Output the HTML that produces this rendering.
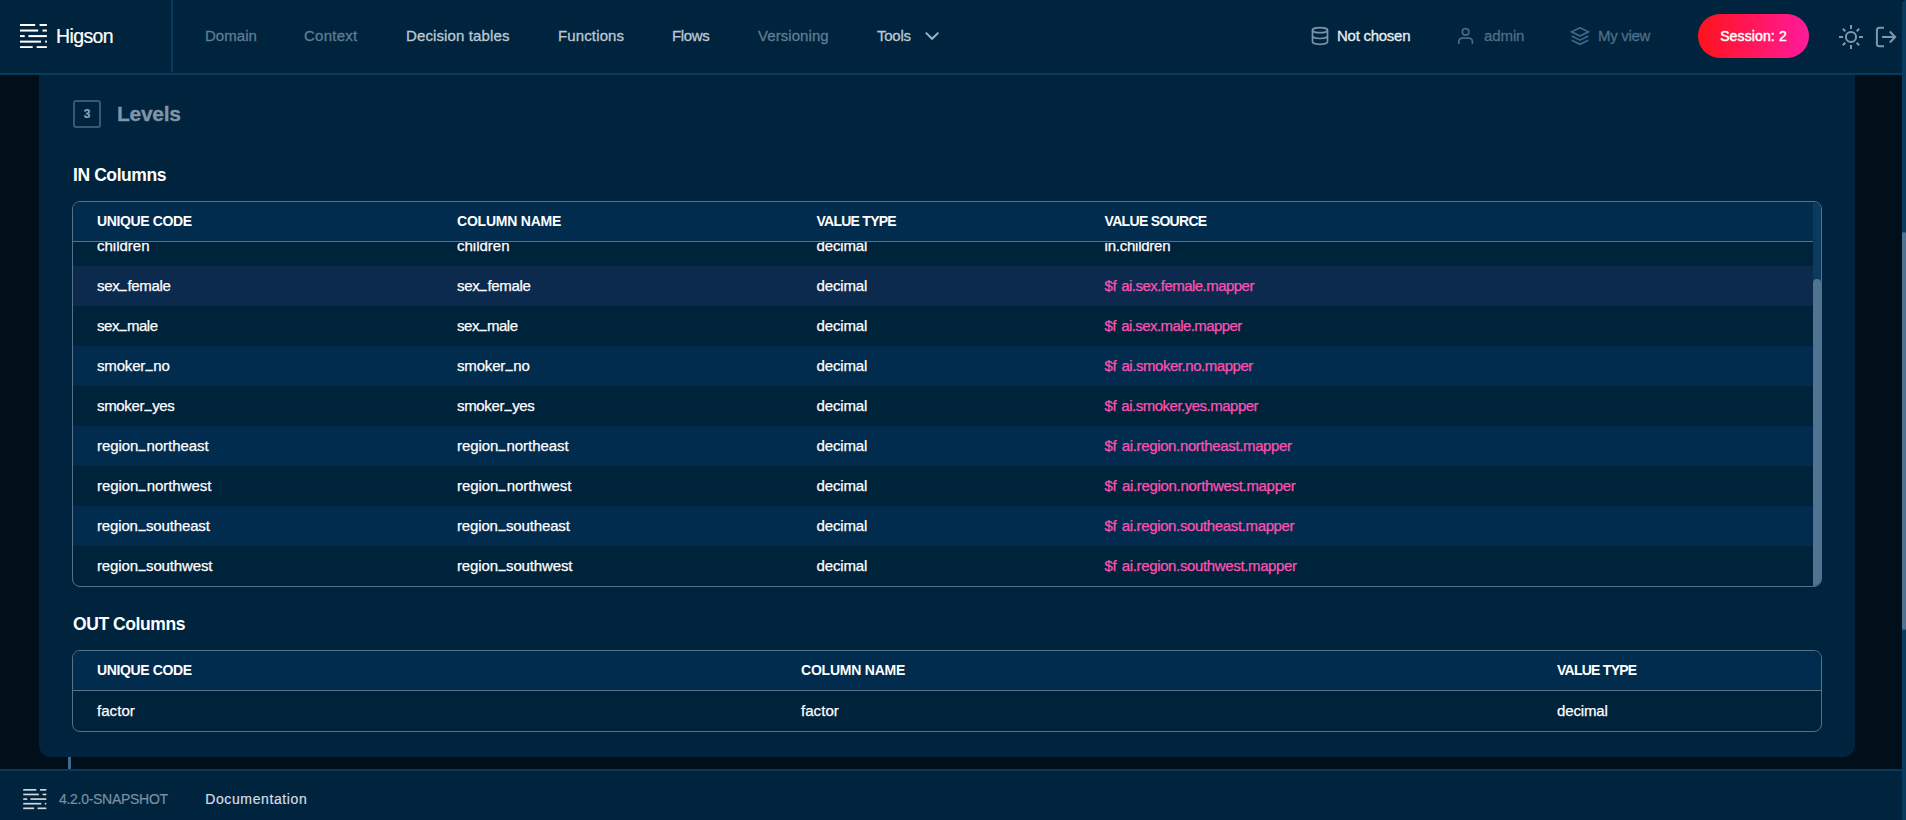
<!DOCTYPE html>
<html lang="en">
<head>
<meta charset="utf-8">
<title>Higson Studio</title>
<style>
*{box-sizing:border-box;margin:0;padding:0}
html,body{width:1906px;height:820px;overflow:hidden;background:#000f1a;font-family:"Liberation Sans",sans-serif;color:#fff}
body{position:relative}
/* ---------- header ---------- */
#hdr{position:absolute;left:0;top:0;width:1902px;height:75px;background:#00243d;border-bottom:2px solid #083a5e}
#logo{position:absolute;left:0;top:0;width:173px;height:72px;border-right:2px solid #083a5e}
#logo svg{position:absolute;left:20.4px;top:23.9px}
#logo .nm{position:absolute;left:56px;top:24px;font-size:19.5px;line-height:24px;color:#fff;white-space:nowrap;-webkit-text-stroke:.2px #fff}
.nav{position:absolute;top:26px;height:20px;font-size:15px;line-height:20px;white-space:nowrap;color:#bcc8d3;font-weight:400;-webkit-text-stroke:.3px currentColor}
.nav.dim{color:#5f7c94}
.hi{position:absolute;top:26px;height:20px;font-size:15px;line-height:20px;white-space:nowrap;-webkit-text-stroke:.3px currentColor}
.ico{position:absolute}
#sess{position:absolute;left:1698px;top:14px;width:111px;height:44px;border-radius:22px;background:linear-gradient(90deg,#ff121c 0%,#ff1b9c 100%);color:#fff;font-size:14px;line-height:44px;text-align:center;font-weight:400;-webkit-text-stroke:.45px #fff}
/* ---------- scrollbar ---------- */
#sb{position:absolute;left:1902px;top:0;width:4px;height:820px;background:#0a3a5c;border-top-left-radius:4px}
#sb i{position:absolute;left:0;top:232px;width:4px;height:398px;background:#4f7390;border-radius:2px}
/* ---------- card ---------- */
#card{position:absolute;left:39px;top:75px;width:1816px;height:682px;background:#00243d;border-radius:0 0 12px 12px}
#stem{position:absolute;left:68px;top:757px;width:3px;height:12px;background:#40688a}
.step{position:absolute;left:73px;top:100px;width:28px;height:28px;border:2px solid #3a5873;border-radius:3px;color:#8ea2b4;font-size:12px;font-weight:700;line-height:24px;text-align:center;-webkit-text-stroke:.2px currentColor}
h2{position:absolute;left:117px;top:100px;font-size:21px;line-height:28px;font-weight:700;color:#7f95a8;white-space:nowrap;-webkit-text-stroke:.3px currentColor}
h3{position:absolute;left:73px;font-size:17.5px;line-height:24px;font-weight:700;color:#fff;white-space:nowrap}
/* ---------- tables ---------- */
.tbl{position:absolute;left:72px;width:1750px;border:1px solid #56728a;border-radius:8px;overflow:hidden;background:#00233c}
.th{position:absolute;left:0;top:0;height:40px;width:100%;background:#022c4e;border-bottom:1px solid #56728a;z-index:2}
.th span{position:absolute;top:0;font-size:14px;line-height:38px;font-weight:700;color:#fff;white-space:nowrap}
.row{position:absolute;left:0;height:40px;width:1740px}
.row.alt{background:#022c4e}
.row.hov{background:#0b2a4e}
.row span{position:absolute;top:0;font-size:15px;line-height:39px;color:#fff;white-space:nowrap;-webkit-text-stroke:.25px currentColor}
.row span.f{color:#fb52b1;line-height:40px;word-spacing:1.6px}
.row i.u{font-style:normal;display:inline-block;position:relative;top:-2.7px;transform:scaleX(.8);-webkit-text-stroke:.55px currentColor}
.c1{left:24px}.c2{left:384px}.c3{left:743.5px}.c4{left:1031.6px}
.o1{left:24px}.o2{left:728px}.o3{left:1484px}
.vsb{position:absolute;right:0;top:0;width:8px;height:100%;background:#0a3a5c;z-index:3}
.vsb i{position:absolute;left:0;top:77px;width:8px;height:310px;background:#4f7390;border-radius:4px}
/* ---------- footer ---------- */
#ftr{position:absolute;left:0;top:769px;width:1902px;height:51px;background:#00243d;border-top:2px solid #083a5e}
#ftr svg{position:absolute;left:23px;top:18px}
#ftr span{position:absolute;top:18px;font-size:14px;line-height:20px;white-space:nowrap;-webkit-text-stroke:.2px currentColor}
</style>
</head>
<body>
<div id="hdr">
  <div id="logo">
    <svg width="26.9" height="24.2" viewBox="0 0 27.5 24" preserveAspectRatio="none" fill="#fff"><rect x="0" y="0" width="15.5" height="2"/><rect x="20" y="0" width="7.5" height="2"/><rect x="0" y="5.5" width="18.6" height="2"/><rect x="23" y="5.5" width="4.5" height="2"/><rect x="0" y="11" width="4.8" height="2"/><rect x="8.6" y="11" width="18.9" height="2"/><rect x="0" y="16.5" width="21.5" height="2"/><rect x="25.7" y="16.5" width="1.8" height="2"/><rect x="0" y="22" width="13" height="2"/><rect x="17" y="22" width="10.5" height="2"/></svg>
    <span class="nm" style="letter-spacing:-0.62px">Higson</span>
  </div>
  <span class="nav dim" style="letter-spacing:0.04px;left:205px">Domain</span>
  <span class="nav dim" style="letter-spacing:0.25px;left:304px">Context</span>
  <span class="nav" style="letter-spacing:0.12px;left:406px">Decision tables</span>
  <span class="nav" style="letter-spacing:0.13px;left:558px">Functions</span>
  <span class="nav" style="letter-spacing:-0.38px;left:672px">Flows</span>
  <span class="nav dim" style="letter-spacing:0.07px;left:758px">Versioning</span>
  <span class="nav" style="letter-spacing:-0.25px;left:877px">Tools</span>
  <svg class="ico" style="left:920px;top:28px" width="24" height="16" viewBox="0 0 24 16" fill="none" stroke="#9bb3c8" stroke-width="2" stroke-linejoin="miter"><path d="M5.8 4.6 L12.1 10.8 L18.4 4.6"/></svg>

  <svg class="ico" style="left:1309.6px;top:25.9px" width="20" height="20" viewBox="0 0 24 24" fill="none" stroke="#7a93aa" stroke-width="2" stroke-linecap="round" stroke-linejoin="round"><ellipse cx="12" cy="5" rx="9" ry="3"/><path d="M3 5v14a9 3 0 0 0 18 0V5"/><path d="M3 12a9 3 0 0 0 18 0"/></svg>
  <span class="hi" style="letter-spacing:-0.26px;left:1337px;color:#e9eef2">Not chosen</span>
  <svg class="ico" style="left:1455px;top:25px" width="22" height="22" viewBox="0 0 22 22" fill="none" stroke="#476985" stroke-width="1.7"><circle cx="10.6" cy="6.9" r="3.25"/><path d="M3.8 19 v-2.4 a3.4 3.4 0 0 1 3.4-3.4 h6.8 a3.4 3.4 0 0 1 3.4 3.4 v2.4"/></svg>
  <span class="hi" style="letter-spacing:-0.10px;left:1484px;color:#4f6e88">admin</span>
  <svg class="ico" style="left:1569.5px;top:25.9px" width="20" height="20" viewBox="0 0 24 24" fill="none" stroke="#3f6889" stroke-width="2" stroke-linejoin="miter"><path d="M12 2 L22 7 L12 12 L2 7 Z"/><path d="M2 12 L12 17 L22 12"/><path d="M2 17 L12 22 L22 17"/></svg>
  <span class="hi" style="letter-spacing:-0.30px;left:1598px;color:#4f6e88">My view</span>
  <div id="sess" style="letter-spacing:0.13px">Session: 2</div>
  <svg class="ico" style="left:1839px;top:25px" width="24" height="24" viewBox="0 0 24 24" fill="none" stroke="#7d98af" stroke-width="2"><circle cx="12" cy="12" r="5.1"/><path d="M12 0v4M12 20v4M0 12h4M20 12h4M3.8 3.8l2.5 2.5M17.7 17.7l2.5 2.5M3.8 20.2l2.5-2.5M17.7 6.3l2.5-2.5"/></svg>
  <svg class="ico" style="left:1874px;top:25px" width="24" height="24" viewBox="0 0 24 24" fill="none" stroke="#7d98af" stroke-width="2" stroke-linejoin="miter"><path d="M10 2.8H5.4a2.5 2.5 0 0 0-2.5 2.5V18.7a2.5 2.5 0 0 0 2.5 2.5H10"/><path d="M8 12H20.5"/><path d="M15.8 6.5L21.2 12L15.8 17.5"/></svg>
</div>

<div id="card">
</div>
<div class="step">3</div>
<h2 style="letter-spacing:-0.28px">Levels</h2>
<h3 style="letter-spacing:-0.41px;top:163px">IN Columns</h3>

<div class="tbl" style="top:201px;height:386px">
  <div class="th"><span class="c1" style="letter-spacing:-0.37px">UNIQUE CODE</span><span class="c2" style="letter-spacing:-0.22px">COLUMN NAME</span><span class="c3" style="letter-spacing:-0.74px">VALUE TYPE</span><span class="c4" style="letter-spacing:-0.69px">VALUE SOURCE</span></div>
  <div class="row" style="top:24px"><span class="c1">children</span><span class="c2">children</span><span class="c3" style="letter-spacing:-0.15px">decimal</span><span class="c4" style="letter-spacing:-0.24px;line-height:40px">in.children</span></div>
  <div class="row hov" style="top:64px"><span class="c1" style="letter-spacing:-0.33px">sex<i class="u">_</i>female</span><span class="c2" style="letter-spacing:-0.33px">sex<i class="u">_</i>female</span><span class="c3" style="letter-spacing:-0.15px">decimal</span><span class="c4 f" style="letter-spacing:-0.54px">$f ai.sex.female.mapper</span></div>
  <div class="row" style="top:104px"><span class="c1" style="letter-spacing:-0.45px">sex<i class="u">_</i>male</span><span class="c2" style="letter-spacing:-0.45px">sex<i class="u">_</i>male</span><span class="c3" style="letter-spacing:-0.15px">decimal</span><span class="c4 f" style="letter-spacing:-0.57px">$f ai.sex.male.mapper</span></div>
  <div class="row alt" style="top:144px"><span class="c1" style="letter-spacing:-0.17px">smoker<i class="u">_</i>no</span><span class="c2" style="letter-spacing:-0.17px">smoker<i class="u">_</i>no</span><span class="c3" style="letter-spacing:-0.15px">decimal</span><span class="c4 f" style="letter-spacing:-0.46px">$f ai.smoker.no.mapper</span></div>
  <div class="row" style="top:184px"><span class="c1" style="letter-spacing:-0.34px">smoker<i class="u">_</i>yes</span><span class="c2" style="letter-spacing:-0.34px">smoker<i class="u">_</i>yes</span><span class="c3" style="letter-spacing:-0.15px">decimal</span><span class="c4 f" style="letter-spacing:-0.50px">$f ai.smoker.yes.mapper</span></div>
  <div class="row alt" style="top:224px"><span class="c1" style="letter-spacing:-0.07px">region<i class="u">_</i>northeast</span><span class="c2" style="letter-spacing:-0.07px">region<i class="u">_</i>northeast</span><span class="c3" style="letter-spacing:-0.15px">decimal</span><span class="c4 f" style="letter-spacing:-0.36px">$f ai.region.northeast.mapper</span></div>
  <div class="row" style="top:264px"><span class="c1" style="letter-spacing:-0.05px">region<i class="u">_</i>northwest</span><span class="c2" style="letter-spacing:-0.05px">region<i class="u">_</i>northwest</span><span class="c3" style="letter-spacing:-0.15px">decimal</span><span class="c4 f" style="letter-spacing:-0.32px">$f ai.region.northwest.mapper</span></div>
  <div class="row alt" style="top:304px"><span class="c1" style="letter-spacing:-0.15px">region<i class="u">_</i>southeast</span><span class="c2" style="letter-spacing:-0.15px">region<i class="u">_</i>southeast</span><span class="c3" style="letter-spacing:-0.15px">decimal</span><span class="c4 f" style="letter-spacing:-0.36px">$f ai.region.southeast.mapper</span></div>
  <div class="row" style="top:344px"><span class="c1" style="letter-spacing:-0.14px">region<i class="u">_</i>southwest</span><span class="c2" style="letter-spacing:-0.14px">region<i class="u">_</i>southwest</span><span class="c3" style="letter-spacing:-0.15px">decimal</span><span class="c4 f" style="letter-spacing:-0.36px">$f ai.region.southwest.mapper</span></div>
  <div class="vsb"><i></i></div>
</div>

<h3 style="letter-spacing:-0.42px;top:612px">OUT Columns</h3>
<div class="tbl" style="top:650px;height:82px">
  <div class="th"><span class="o1" style="letter-spacing:-0.37px">UNIQUE CODE</span><span class="o2" style="letter-spacing:-0.22px">COLUMN NAME</span><span class="o3" style="letter-spacing:-0.74px">VALUE TYPE</span></div>
  <div class="row" style="top:40px;width:1748px"><span class="o1" style="letter-spacing:0.05px">factor</span><span class="o2" style="letter-spacing:0.05px">factor</span><span class="o3" style="letter-spacing:-0.15px">decimal</span></div>
</div>

<div id="stem"></div>
<div id="ftr">
  <svg width="24" height="21" viewBox="0 0 28 25" fill="#d0d8e0"><rect x="0" y="0" width="15.5" height="2"/><rect x="20" y="0" width="7.5" height="2"/><rect x="0" y="5.5" width="18.6" height="2"/><rect x="23" y="5.5" width="4.5" height="2"/><rect x="0" y="11" width="4.8" height="2"/><rect x="8.6" y="11" width="18.9" height="2"/><rect x="0" y="16.5" width="21.5" height="2"/><rect x="25.7" y="16.5" width="1.8" height="2"/><rect x="0" y="22" width="13" height="2"/><rect x="17" y="22" width="10.5" height="2"/></svg>
  <span style="letter-spacing:-0.29px;left:59px;color:#7b8fa0">4.2.0-SNAPSHOT</span>
  <span style="letter-spacing:0.62px;left:205.2px;color:#d5dde5">Documentation</span>
</div>
<div id="sb"><i></i></div>
</body>
</html>
